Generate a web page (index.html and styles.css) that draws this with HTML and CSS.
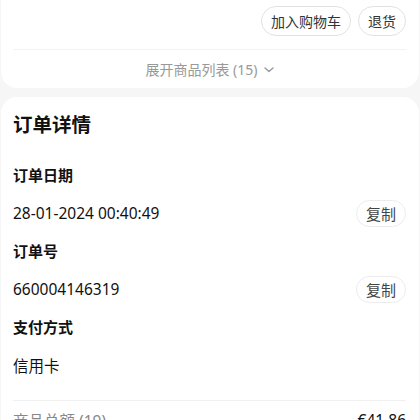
FILE: index.html
```
<!DOCTYPE html>
<html lang="zh">

<head>
    <meta charset="UTF-8">
    <meta name="viewport" content="width=device-width, initial-scale=1.0">
    <title>订单详情</title>
    <link rel="stylesheet" href="styles.css">
</head>

<body>
    <div class="card card-top">
        <div class="actions">
            <button class="pill">加入购物车</button>
            <button class="pill">退货</button>
        </div>
        <div class="expand">
            <span>展开商品列表 (15)</span>
            <svg class="chevron" width="10" height="6" viewBox="0 0 10 6">
                <path d="M1 1l4 3.5L9 1" fill="none" stroke="#999" stroke-width="1.4" stroke-linecap="round" stroke-linejoin="round"/>
            </svg>
        </div>
    </div>

    <div class="card card-detail">
        <h2 class="title">订单详情</h2>

        <div class="label">订单日期</div>
        <div class="row">
            <span class="value">28-01-2024 00:40:49</span>
            <button class="pill pill-small">复制</button>
        </div>

        <div class="label">订单号</div>
        <div class="row">
            <span class="value">660004146319</span>
            <button class="pill pill-small">复制</button>
        </div>

        <div class="label">支付方式</div>
        <div class="row">
            <span class="value">信用卡</span>
        </div>

        <div class="summary">
            <span>商品总额 (19)</span>
            <span class="amount">€41.86</span>
        </div>
    </div>
</body>

</html>
```

FILE: styles.css
```
body {
    margin: 0;
    background-color: #f6f6f6;
    font-family: "Noto Sans", "Noto Sans CJK SC", sans-serif;
    color: #111;
}

.card {
    background-color: #fff;
    border-radius: 16px;
    margin: 0 1px;
}

.card-top {
    border-top-left-radius: 0;
    border-top-right-radius: 0;
    padding: 6px 13px 0 12px;
}

.actions {
    display: flex;
    justify-content: flex-end;
    gap: 7px;
    padding-bottom: 13px;
    border-bottom: 1px solid #f3f3f3;
}

.pill {
    font-family: inherit;
    font-size: 14px;
    color: #333;
    background: #fff;
    border: 1px solid #e2e2e2;
    border-radius: 15px;
    height: 30px;
    padding: 0 9px;
}

.pill-small {
    height: 27px;
    padding: 0 9px;
    font-size: 15px;
    color: #444;
    border-color: #ececec;
}

.expand {
    display: flex;
    justify-content: center;
    align-items: center;
    gap: 6px;
    height: 38px;
    color: #999;
    font-size: 14px;
}

.chevron {
    margin-top: 2px;
}

.card-detail {
    margin-top: 9px;
    padding: 14px 13px 20px 12px;
}

.title {
    margin: 0 0 25px;
    font-size: 19.5px;
    line-height: 28px;
    font-weight: 700;
}

.label {
    font-size: 15px;
    font-weight: 700;
    height: 22px;
    line-height: 22px;
}

.row {
    display: flex;
    justify-content: space-between;
    align-items: center;
    height: 30px;
    margin: 12px 0;
    font-size: 15.5px;
}

.summary {
    display: flex;
    justify-content: space-between;
    margin-top: 20px;
    padding-top: 8px;
    border-top: 1px solid #f0f0f0;
    font-size: 15.5px;
    color: #888;
}

.amount {
    color: #111;
}
```
